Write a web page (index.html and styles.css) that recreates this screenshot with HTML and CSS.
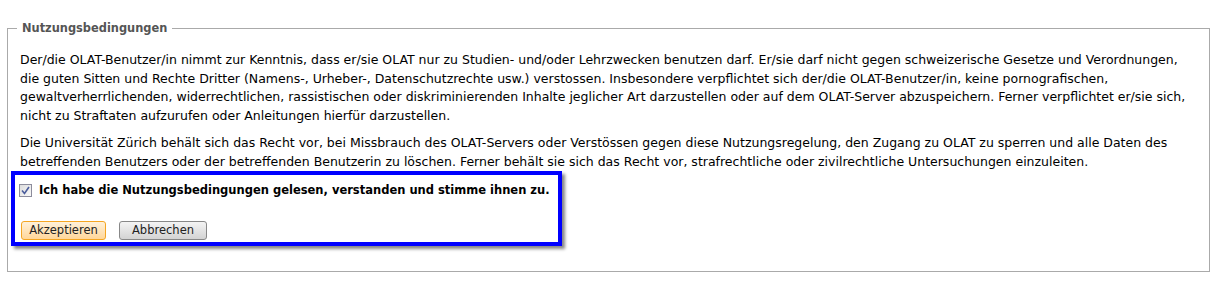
FILE: index.html
```html
<!DOCTYPE html>
<html lang="de">
  <head>
    <meta charset="UTF-8" />
    <title>Nutzungsbedingungen</title>
    <link rel="stylesheet" href="styles.css">
  </head>
  <body>
    <!-- NUTZUNGSBEDINGUNGEN -->
    <fieldset class="bedingungen">
      <legend>Nutzungsbedingungen</legend>
      <p>Der/die OLAT-Benutzer/in nimmt zur Kenntnis, dass er/sie OLAT nur zu Studien- und/oder Lehrzwecken benutzen darf. Er/sie darf nicht gegen schweizerische Gesetze und Verordnungen, die guten Sitten und Rechte Dritter (Namens-, Urheber-, Datenschutzrechte usw.) verstossen. Insbesondere verpflichtet sich der/die OLAT-Benutzer/in, keine pornografischen, gewaltverherrlichenden, widerrechtlichen, rassistischen oder diskriminierenden Inhalte jeglicher Art darzustellen oder auf dem OLAT-Server abzuspeichern. Ferner verpflichtet er/sie sich, nicht zu Straftaten aufzurufen oder Anleitungen hierfür darzustellen.</p>
      <p>Die Universität Zürich behält sich das Recht vor, bei Missbrauch des OLAT-Servers oder Verstössen gegen diese Nutzungsregelung, den Zugang zu OLAT zu sperren und alle Daten des betreffenden Benutzers oder der betreffenden Benutzerin zu löschen. Ferner behält sie sich das Recht vor, strafrechtliche oder zivilrechtliche Untersuchungen einzuleiten.</p>

      <!-- FORMULAR (markiert) -->
      <form class="markiert">
        <label class="zustimmung">
          <input type="checkbox" checked />
          <span class="boks">
            <svg width="9" height="9" viewBox="0 0 9 9"><path d="M1 4.5 L3.5 7.5 L8 1" fill="none" stroke="#4b5d9c" stroke-width="1.6"/></svg>
          </span>
          Ich habe die Nutzungsbedingungen gelesen, verstanden und stimme ihnen zu.
        </label>
        <div class="knapper">
          <button type="button" class="akzeptieren">Akzeptieren</button>
          <button type="button" class="abbrechen">Abbrechen</button>
        </div>
      </form>
    </fieldset>
  </body>
</html>
```

FILE: styles.css
```css
body {
  margin: 0;
  background-color: #fff;
  font-family: "DejaVu Sans", Verdana, sans-serif;
  font-size: 12.5px;
  color: #000;
}
.bedingungen {
  margin: 21px 7px 0 7px;
  padding: 16px 4px 0 3px;
  border: 1px solid #aaa;
  height: 251px;
  box-sizing: border-box;
}
legend {
  margin-left: 6px;
  padding: 0 5px;
  font-size: 11.4px;
  font-weight: bold;
  color: #555;
}
p {
  margin: 0 12px 0 9px;
  line-height: 18.6px;
}
p + p {
  margin-top: 9px;
}
.markiert {
  width: 535px;
  margin-top: -1px;
  padding: 8px 4px 2px 4px;
  border: 4px solid #0000ff;
  box-shadow: 3px 3px 3px #888;
}
.zustimmung {
  display: flex;
  align-items: center;
  gap: 7px;
  font-size: 11.5px;
  font-weight: bold;
  line-height: 15px;
}
.zustimmung input {
  display: none;
}
.boks {
  display: flex;
  align-items: center;
  justify-content: center;
  flex: none;
  width: 11px;
  height: 11px;
  border: 1px solid #8c8c9c;
  background: linear-gradient(135deg, #dcdcdc, #fafafa);
}
.knapper {
  display: flex;
  gap: 13px;
  margin-top: 23px;
  padding-left: 2px;
}
button {
  height: 19px;
  padding: 0;
  font-family: "DejaVu Sans", Verdana, sans-serif;
  font-size: 11.5px;
  color: #222;
  border-radius: 3px;
}
.akzeptieren {
  width: 85px;
  border: 1px solid #f5a623;
  background: linear-gradient(#fff1da, #ffd79a);
}
.abbrechen {
  width: 88px;
  border: 1px solid #888;
  background: linear-gradient(#f4f4f4, #d3d3d3);
}
```
